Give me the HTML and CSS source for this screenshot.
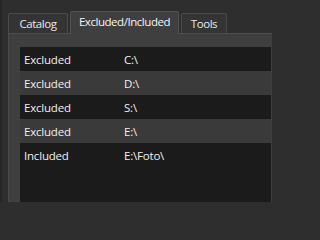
FILE: index.html
```html
<!DOCTYPE html>
<html>
<head>
<meta charset="utf-8">
<link rel="stylesheet" href="styles.css">
</head>
<body>
<div class="frame">
  <div class="tabbar">
    <div class="tab tab-catalog">Catalog</div>
    <div class="tab tab-excl active">Excluded/Included</div>
    <div class="tab tab-tools">Tools</div>
  </div>
  <div class="panel">
    <div class="list">
      <div class="row"><span class="kind">Excluded</span><span class="path">C:\</span></div>
      <div class="row alt"><span class="kind">Excluded</span><span class="path">D:\</span></div>
      <div class="row"><span class="kind">Excluded</span><span class="path">S:\</span></div>
      <div class="row alt"><span class="kind">Excluded</span><span class="path">E:\</span></div>
      <div class="row"><span class="kind">Included</span><span class="path">E:\Foto\</span></div>
    </div>
  </div>
</div>
</body>
</html>
```

FILE: styles.css
```css
html, body {
  margin: 0;
  padding: 0;
  width: 272px;
  height: 202px;
  overflow: hidden;
  background: #2e2e2e;
  font-family: "Open Sans", "Noto Sans", sans-serif;
  font-size: 11.5px;
  letter-spacing: -0.2px;
  color: #f0f0f0;
}

.frame {
  display: flex;
  flex-direction: column;
  height: 202px;
  border-left: 2px solid #262626;
  padding-left: 6px;
  box-sizing: border-box;
}

.tabbar {
  display: flex;
  align-items: flex-end;
  gap: 2px;
  padding-top: 11px;
  margin-bottom: -1px;
  position: relative;
  z-index: 1;
}

.tab {
  box-sizing: border-box;
  height: 20px;
  margin-bottom: 1px;
  padding: 0 0 1px;
  display: flex;
  align-items: center;
  justify-content: center;
  border: 1px solid #4b4b4b;
  border-bottom: none;
  border-radius: 2px 2px 0 0;
  background: #343434;
  color: #e8e8e8;
  white-space: nowrap;
  letter-spacing: -0.45px;
}

.tab-catalog { width: 60px; }
.tab-excl { width: 109px; }
.tab-tools { width: 46px; }

.tab.active {
  height: 23px;
  margin-bottom: 0;
  padding-bottom: 3px;
  background: #3f3f3f;
  border-color: #525252;
  color: #f4f4f4;
}

.panel {
  flex: 1;
  background: #3f3f3f;
  border-top: 1px solid #4e4e4e;
  border-left: 1px solid #4a4a4a;
  padding: 13px 1px 0 11px;
  display: flex;
  flex-direction: column;
}

.list {
  flex: 1;
  background: #1b1b1b;
}

.row {
  display: grid;
  grid-template-columns: 100px 1fr;
  height: 24px;
  align-items: center;
  padding-left: 4px;
}

.row.alt {
  background: #3a3a3a;
}
```
